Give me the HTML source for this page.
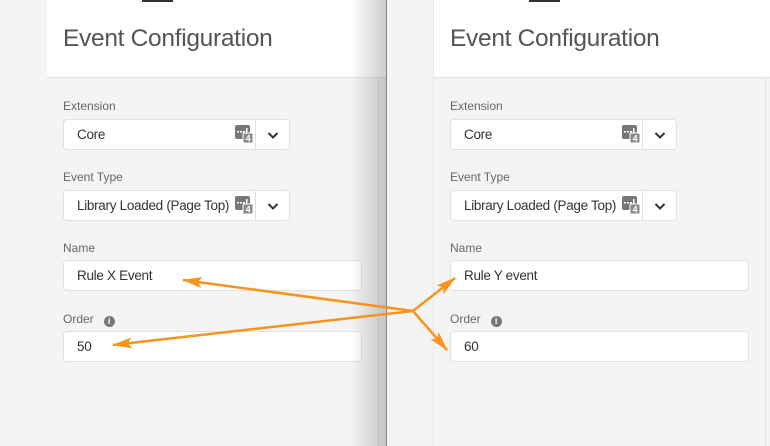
<!DOCTYPE html>
<html><head><meta charset="utf-8"><style>
*{box-sizing:border-box;margin:0;padding:0}
body{width:770px;height:446px;overflow:hidden;background:#f4f4f4;font-family:"Liberation Sans",sans-serif;position:relative}
.panel{position:absolute;top:0;height:446px;background:#f4f4f4}
.hdr{position:absolute;left:0;top:0;right:0;height:78px;background:#fff;border-bottom:1px solid #e3e3e3}
.hdr h1{position:absolute;left:16px;top:25px;font-weight:normal;font-size:24.5px;color:#555;letter-spacing:-0.3px}
.tab{position:absolute;top:0;height:2px;width:31px;background:#333}
.lbl{position:absolute;left:16px;font-size:12px;color:#666}
.box{position:absolute;left:16px;height:31px;background:#fff;border:1px solid #e1e1e1;border-radius:4px;font-size:13.5px;color:#333;padding:7px 0 0 13px;letter-spacing:-0.3px;white-space:nowrap}
.sel{width:227px}
.sel .dv{position:absolute;left:191px;top:0;bottom:0;border-left:1px solid #e1e1e1}
.sel .ch{position:absolute;left:202px;top:8px}
.sel .ic{position:absolute;left:171px;top:5px;width:18px;height:18px}
.inp{width:299px}
.info{display:inline-block;width:11px;height:11px;border-radius:50%;background:#777;color:#fff;font-size:9px;font-weight:bold;text-align:center;line-height:11px;margin-left:10px;vertical-align:-1px}
</style></head><body>

<div class="panel" style="left:47px;width:340px">
 <div class="hdr"><h1>Event Configuration</h1></div>
 <div class="tab" style="left:95px"></div>
 <div class="lbl" style="top:99px">Extension</div>
 <div class="box sel" style="top:119px">Core<span class="ic"><svg width="18" height="18"><rect x="0" y="0" width="15" height="14" rx="2" fill="#777"/><rect x="2" y="6" width="2" height="1.5" fill="#fff"/><rect x="5" y="6" width="2" height="1.5" fill="#fff"/><rect x="8" y="6" width="2" height="1.5" fill="#fff"/><rect x="11" y="3" width="1.5" height="4.5" fill="#fff"/><rect x="8" y="8" width="10" height="10" rx="1" fill="#888" stroke="#fff"/><text x="13" y="16.5" font-size="9" font-weight="bold" fill="#fff" text-anchor="middle" font-family="Liberation Sans">4</text></svg></span><span class="dv"></span><svg class="ch" width="14" height="14"><path d="M2.5 5 L7 9.5 L11.5 5" stroke="#333" stroke-width="2" fill="none"/></svg></div>
 <div class="lbl" style="top:170px">Event Type</div>
 <div class="box sel" style="top:190px">Library Loaded (Page Top)<span class="ic"><svg width="18" height="18"><rect x="0" y="0" width="15" height="14" rx="2" fill="#777"/><rect x="2" y="6" width="2" height="1.5" fill="#fff"/><rect x="5" y="6" width="2" height="1.5" fill="#fff"/><rect x="8" y="6" width="2" height="1.5" fill="#fff"/><rect x="11" y="3" width="1.5" height="4.5" fill="#fff"/><rect x="8" y="8" width="10" height="10" rx="1" fill="#888" stroke="#fff"/><text x="13" y="16.5" font-size="9" font-weight="bold" fill="#fff" text-anchor="middle" font-family="Liberation Sans">4</text></svg></span><span class="dv"></span><svg class="ch" width="14" height="14"><path d="M2.5 5 L7 9.5 L11.5 5" stroke="#333" stroke-width="2" fill="none"/></svg></div>
 <div class="lbl" style="top:241px">Name</div>
 <div class="box inp" style="top:260px">Rule X Event</div>
 <div class="lbl" style="top:312px">Order<span class="info">i</span></div>
 <div class="box inp" style="top:331px">50</div>
 <div style="position:absolute;left:303px;top:0;width:37px;height:446px;background:linear-gradient(to right,rgba(0,0,0,0),rgba(0,0,0,0.2))"></div>
 <div style="position:absolute;left:331px;top:78px;width:1px;height:368px;background:rgba(0,0,0,0.08)"></div>
 <div style="position:absolute;left:339px;top:0;width:1px;height:446px;background:#888"></div>
</div>

<div class="panel" style="left:433px;width:337px;border-left:1px solid #e6e6e6">
 <div class="hdr"><h1>Event Configuration</h1></div>
 <div class="tab" style="left:95px"></div>
 <div class="lbl" style="top:99px">Extension</div>
 <div class="box sel" style="top:119px">Core<span class="ic"><svg width="18" height="18"><rect x="0" y="0" width="15" height="14" rx="2" fill="#777"/><rect x="2" y="6" width="2" height="1.5" fill="#fff"/><rect x="5" y="6" width="2" height="1.5" fill="#fff"/><rect x="8" y="6" width="2" height="1.5" fill="#fff"/><rect x="11" y="3" width="1.5" height="4.5" fill="#fff"/><rect x="8" y="8" width="10" height="10" rx="1" fill="#888" stroke="#fff"/><text x="13" y="16.5" font-size="9" font-weight="bold" fill="#fff" text-anchor="middle" font-family="Liberation Sans">4</text></svg></span><span class="dv"></span><svg class="ch" width="14" height="14"><path d="M2.5 5 L7 9.5 L11.5 5" stroke="#333" stroke-width="2" fill="none"/></svg></div>
 <div class="lbl" style="top:170px">Event Type</div>
 <div class="box sel" style="top:190px">Library Loaded (Page Top)<span class="ic"><svg width="18" height="18"><rect x="0" y="0" width="15" height="14" rx="2" fill="#777"/><rect x="2" y="6" width="2" height="1.5" fill="#fff"/><rect x="5" y="6" width="2" height="1.5" fill="#fff"/><rect x="8" y="6" width="2" height="1.5" fill="#fff"/><rect x="11" y="3" width="1.5" height="4.5" fill="#fff"/><rect x="8" y="8" width="10" height="10" rx="1" fill="#888" stroke="#fff"/><text x="13" y="16.5" font-size="9" font-weight="bold" fill="#fff" text-anchor="middle" font-family="Liberation Sans">4</text></svg></span><span class="dv"></span><svg class="ch" width="14" height="14"><path d="M2.5 5 L7 9.5 L11.5 5" stroke="#333" stroke-width="2" fill="none"/></svg></div>
 <div class="lbl" style="top:241px">Name</div>
 <div class="box inp" style="top:260px">Rule Y event</div>
 <div class="lbl" style="top:312px">Order<span class="info">i</span></div>
 <div class="box inp" style="top:331px">60</div>
 <div style="position:absolute;right:4px;top:78px;width:1px;height:368px;background:#e3e3e3"></div>
</div>

<svg width="770" height="446" style="position:absolute;left:0;top:0">
 <defs><marker id="a" markerWidth="20" markerHeight="12" refX="19" refY="5.5" orient="auto" markerUnits="userSpaceOnUse"><path d="M0 0 L20 5.5 L0 11 L4 5.5 Z" fill="#f7941d"/></marker></defs>
 <g stroke="#f7941d" stroke-width="2.5" fill="none">
  <line x1="413" y1="311" x2="183" y2="280" marker-end="url(#a)"/>
  <line x1="413" y1="311" x2="113" y2="345" marker-end="url(#a)"/>
  <line x1="413" y1="311" x2="455" y2="278" marker-end="url(#a)"/>
  <line x1="413" y1="311" x2="447" y2="350" marker-end="url(#a)"/>
 </g>
</svg>
</body></html>
